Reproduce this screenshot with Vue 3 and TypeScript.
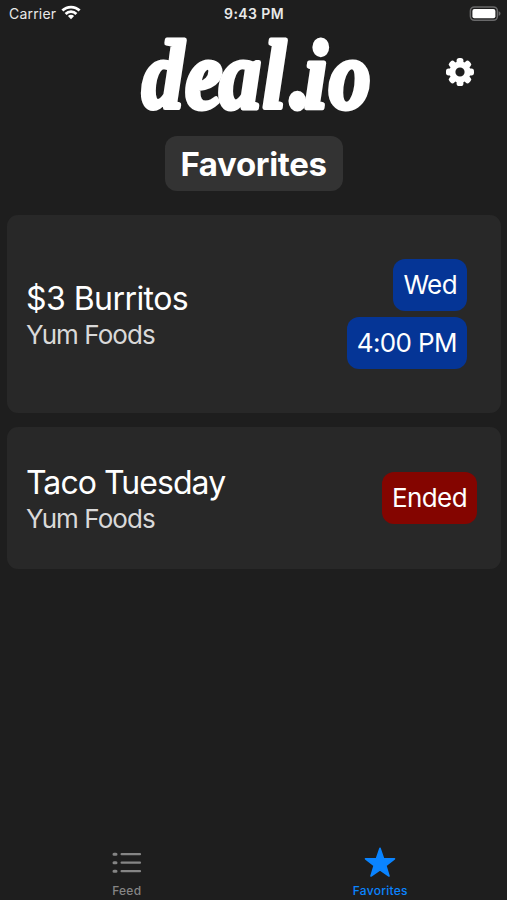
<script setup lang="ts">
interface Tag { text: string; tone: 'blue' | 'red' }
interface Deal { title: string; place: string; size: string; tags: Tag[] }

const deals: Deal[] = [
  {
    title: '$3 Burritos',
    place: 'Yum Foods',
    size: 'tall',
    tags: [{ text: 'Wed', tone: 'blue' }, { text: '4:00 PM', tone: 'blue' }],
  },
  {
    title: 'Taco Tuesday',
    place: 'Yum Foods',
    size: 'short',
    tags: [{ text: 'Ended', tone: 'red' }],
  },
]
</script>

<template>
  <main class="screen">
    <div class="status">
      <div class="carrier">
        <span>Carrier</span>
        <svg class="wifi" width="20" height="15" viewBox="0 0 20 15" fill="none" stroke="#fff" stroke-width="2.8">
          <path d="M1.4 5.6a12.2 12.2 0 0 1 17.2 0" />
          <path d="M4.6 8.9a7.6 7.6 0 0 1 10.8 0" />
          <path d="M10 14.2 6.9 11.1a4.4 4.4 0 0 1 6.2 0z" fill="#fff" stroke="none" />
        </svg>
      </div>
      <span class="time">9:43 PM</span>
      <svg class="battery" width="32" height="16" viewBox="0 0 32 16">
        <rect x="1.4" y="0.9" width="27" height="13.4" rx="4" fill="none" stroke="#69696a" stroke-width="1.5" />
        <rect x="3.4" y="2.9" width="23" height="9.4" rx="2" fill="#fff" />
        <path d="M29.7 5.2c2.4.8 2.4 3.8 0 4.6z" fill="#69696a" />
      </svg>
    </div>

    <header class="header">
      <svg class="logo" width="250" height="95" viewBox="0 0 250 95">
        <text transform="translate(12 83) scale(.85 1)" x="0 51 91 142 174 191 220">deal.io</text>
      </svg>
      <svg class="gear" width="30" height="30" viewBox="-15 -15 30 30">
        <g fill="#fff">
          <rect v-for="n in 8" :key="n" x="-3.4" y="-14" width="6.8" height="8" rx="2.6" :transform="`rotate(${n * 45})`" />
        </g>
        <circle r="7.6" fill="none" stroke="#fff" stroke-width="6" />
      </svg>
    </header>

    <h1 class="heading"><span>Favorites</span></h1>

    <section class="list">
      <article v-for="deal in deals" :key="deal.title" class="card" :class="deal.size">
        <div class="info">
          <h2 class="title">{{ deal.title }}</h2>
          <p class="place">{{ deal.place }}</p>
        </div>
        <div class="tags">
          <span v-for="tag in deal.tags" :key="tag.text" class="tag" :class="tag.tone">{{ tag.text }}</span>
        </div>
      </article>
    </section>

    <nav class="tabs">
      <div class="tab">
        <svg width="32" height="32" viewBox="0 0 32 32" stroke="#858585" stroke-linecap="round">
          <path d="M10.6 7.2h18.4M10.6 15.7h18.4M10.6 24.2h18.4" stroke-width="2.2" />
          <path d="M3 7.2h2M3 15.7h2M3 24.2h2" stroke-width="3" />
        </svg>
        <span>Feed</span>
      </div>
      <div class="tab active">
        <svg width="32" height="32" viewBox="0 0 32 32" fill="#0a84ff" stroke="#0a84ff" stroke-width="1.6" stroke-linejoin="round">
          <path d="M16 1.3 19.5 11.6 30.5 11.8 21.8 18.5 25 29 16 22.8 7 29 10.2 18.5 1.5 11.8 12.5 11.6z" />
        </svg>
        <span>Favorites</span>
      </div>
    </nav>
  </main>
</template>

<style>
html,
body {
  margin: 0;
  background: #1e1e1e;
}
</style>

<style scoped>
.screen {
  box-sizing: border-box;
  width: 507px;
  height: 900px;
  display: flex;
  flex-direction: column;
  overflow: hidden;
  background: #1e1e1e;
  color: #fff;
  font-family: Inter, "Liberation Sans", sans-serif;
}
.status {
  height: 27px;
  display: grid;
  grid-template-columns: 1fr auto 1fr;
  align-items: center;
  padding: 0 6px 0 9px;
  font-size: 14px;
  color: #e9e9e9;
}
.carrier {
  display: flex;
  align-items: center;
  gap: 5px;
  letter-spacing: 0.2px;
}
.wifi {
  margin-top: -3px;
}
.time {
  font-weight: 600;
  letter-spacing: 0.4px;
  margin-right: 2px;
}
.battery {
  justify-self: end;
}
.header {
  height: 93px;
  display: grid;
  grid-template-columns: 130px 250px 1fr;
  align-items: start;
}
.logo {
  grid-column: 2;
  margin-top: -2px;
  overflow: visible;
}
.logo text {
  font-family: "Liberation Serif", serif;
  font-size: 98px;
  font-weight: 700;
  font-style: italic;
  fill: #fff;
  stroke: #fff;
  stroke-width: 5px;
  stroke-linejoin: round;
}
.gear {
  margin: 30px 0 0 65px;
}
.heading {
  margin: 16px 0 0;
  display: flex;
  justify-content: center;
}
.heading span {
  width: 178px;
  height: 55px;
  border-radius: 12px;
  background: #333;
  font-size: 33px;
  font-weight: 700;
  line-height: 56px;
  letter-spacing: -0.35px;
  text-align: center;
}
.list {
  display: grid;
  gap: 14px;
  padding: 24px 6px 0 7px;
}
.card {
  box-sizing: border-box;
  display: flex;
  justify-content: space-between;
  align-items: center;
  border-radius: 11px;
  background: #282828;
  padding-left: 19px;
}
.tall {
  height: 198px;
  padding-right: 34px;
}
.short {
  height: 142px;
  padding-right: 24px;
}
.info {
  padding-top: 3px;
}
.title {
  margin: 0;
  font-size: 32px;
  font-weight: 400;
  line-height: 38px;
  letter-spacing: -0.55px;
}
.short .title {
  letter-spacing: -0.95px;
}
.place {
  margin: 0;
  color: #d9d9d9;
  font-size: 26px;
  line-height: 34px;
  letter-spacing: -0.95px;
}
.tags {
  display: flex;
  flex-direction: column;
  align-items: flex-end;
  gap: 6px;
}
.tag {
  height: 52px;
  padding: 0 10px;
  border-radius: 12px;
  font-size: 26px;
  line-height: 52px;
  letter-spacing: -0.6px;
}
.blue {
  background: #053596;
}
.red {
  background: #840500;
}
.tabs {
  margin-top: auto;
  display: grid;
  grid-template-columns: 1fr 1fr;
}
.tab {
  display: flex;
  flex-direction: column;
  align-items: center;
  color: #858585;
  font-size: 12px;
  font-weight: 500;
  line-height: 18px;
  letter-spacing: 0.25px;
}
.tab svg {
  margin-bottom: 3px;
}
.active {
  color: #0a84ff;
}
</style>
